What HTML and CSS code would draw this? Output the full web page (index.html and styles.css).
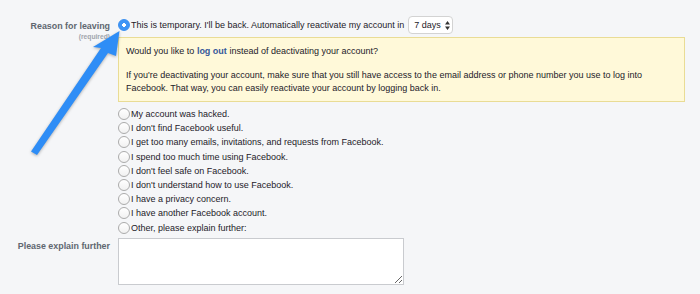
FILE: index.html
```html
<!DOCTYPE html>
<html>
<head>
<meta charset="utf-8">
<link rel="stylesheet" href="styles.css">
</head>
<body>
<div class="page">
  <form class="form">
    <div class="label-cell">
      <div class="label">Reason for leaving</div>
      <div class="required">(required)</div>
    </div>
    <div class="field">
      <label class="option option-top">
        <input type="radio" name="reason" class="radio" checked>
        <span>This is temporary. I'll be back. Automatically reactivate my account in</span>
        <span class="select">7 days
          <svg class="select-arrows" width="5" height="9" viewBox="0 0 5 9"><path d="M2.5 0 L5 3.5 L0 3.5 Z M0 5.5 L5 5.5 L2.5 9 Z" fill="#333"/></svg>
        </span>
      </label>
      <div class="notice">
        <p>Would you like to <a class="link">log out</a> instead of deactivating your account?</p>
        <p>If you're deactivating your account, make sure that you still have access to the email address or phone number you use to log into Facebook. That way, you can easily reactivate your account by logging back in.</p>
      </div>
      <div class="options">
        <label class="option"><input type="radio" name="reason" class="radio"><span>My account was hacked.</span></label>
        <label class="option"><input type="radio" name="reason" class="radio"><span>I don't find Facebook useful.</span></label>
        <label class="option"><input type="radio" name="reason" class="radio"><span>I get too many emails, invitations, and requests from Facebook.</span></label>
        <label class="option"><input type="radio" name="reason" class="radio"><span>I spend too much time using Facebook.</span></label>
        <label class="option"><input type="radio" name="reason" class="radio"><span>I don't feel safe on Facebook.</span></label>
        <label class="option"><input type="radio" name="reason" class="radio"><span>I don't understand how to use Facebook.</span></label>
        <label class="option"><input type="radio" name="reason" class="radio"><span>I have a privacy concern.</span></label>
        <label class="option"><input type="radio" name="reason" class="radio"><span>I have another Facebook account.</span></label>
        <label class="option"><input type="radio" name="reason" class="radio"><span>Other, please explain further:</span></label>
      </div>
    </div>
    <div class="label-cell label-cell-2">
      <div class="label">Please explain further</div>
    </div>
    <div class="field field-2">
      <textarea class="textarea"></textarea>
    </div>
  </form>
  <svg class="arrow" width="140" height="170" viewBox="0 0 140 170">
    <polygon points="31,151.5 37,155 108,53 116,56 119.5,31 93,47 101,48" fill="#2e8df6"/>
  </svg>
</div>
</body>
</html>
```

FILE: styles.css
```css
html, body {
  margin: 0;
  padding: 0;
  background: #f5f6f8;
}

body {
  font-family: "Liberation Sans", Arial, Helvetica, sans-serif;
  font-size: 9px;
  color: #1d2129;
  width: 700px;
  height: 294px;
  overflow: hidden;
}

.page {
  position: relative;
  height: 294px;
}

.form {
  display: grid;
  grid-template-columns: 110px 567px;
  column-gap: 8px;
  padding-top: 16px;
}

.label-cell {
  text-align: right;
  padding-top: 4px;
}

.label {
  font-weight: bold;
  color: #606770;
  font-size: 8.9px;
  line-height: 12px;
}

.required {
  font-size: 6.7px;
  font-weight: bold;
  color: #a0a4ac;
  line-height: 9px;
}

.label-cell-2 {
  padding-top: 2px;
  margin-top: 3px;
}

.field-2 {
  margin-top: 3px;
}

.option {
  display: flex;
  align-items: center;
  height: 14.2px;
  line-height: 14.2px;
  white-space: nowrap;
}

.option-top {
  height: 18px;
}

.radio {
  appearance: none;
  -webkit-appearance: none;
  margin: 0 1px 0 0;
  width: 12px;
  height: 12px;
  border-radius: 50%;
  border: 1px solid #ababab;
  background: linear-gradient(#ffffff, #f1f1f1);
  box-sizing: border-box;
  flex: none;
  position: relative;
}

.radio:checked {
  border-color: #3a8ff0;
  background: radial-gradient(circle, #ffffff 0, #ffffff 1.6px, #3d94f6 2.1px);
}

.select {
  display: inline-flex;
  align-items: center;
  height: 18px;
  box-sizing: border-box;
  margin-left: 4px;
  padding: 0 2px 0 5px;
  border: 1px solid #d3d3d3;
  border-radius: 4px;
  background: #ffffff;
  font-size: 9px;
}

.select-arrows {
  margin-left: 4px;
}

.notice {
  margin-top: 3px;
  background: #fff9d9;
  border: 1px solid #e9dc95;
  padding: 7px 7px 6px 7px;
  line-height: 13px;
}

.notice p {
  margin: 0;
}

.notice p + p {
  margin-top: 11px;
}

.link {
  color: #365899;
  font-weight: bold;
  text-decoration: none;
}

.options {
  margin-top: 5px;
}

.textarea {
  display: block;
  width: 286px;
  height: 47px;
  box-sizing: border-box;
  margin: 0;
  border: 1px solid #c9cbcf;
  background: #ffffff;
  resize: both;
  font-family: inherit;
}

.arrow {
  position: absolute;
  left: 0;
  top: 0;
  pointer-events: none;
  filter: drop-shadow(0 1px 1.5px rgba(0, 0, 0, 0.3));
}
```
